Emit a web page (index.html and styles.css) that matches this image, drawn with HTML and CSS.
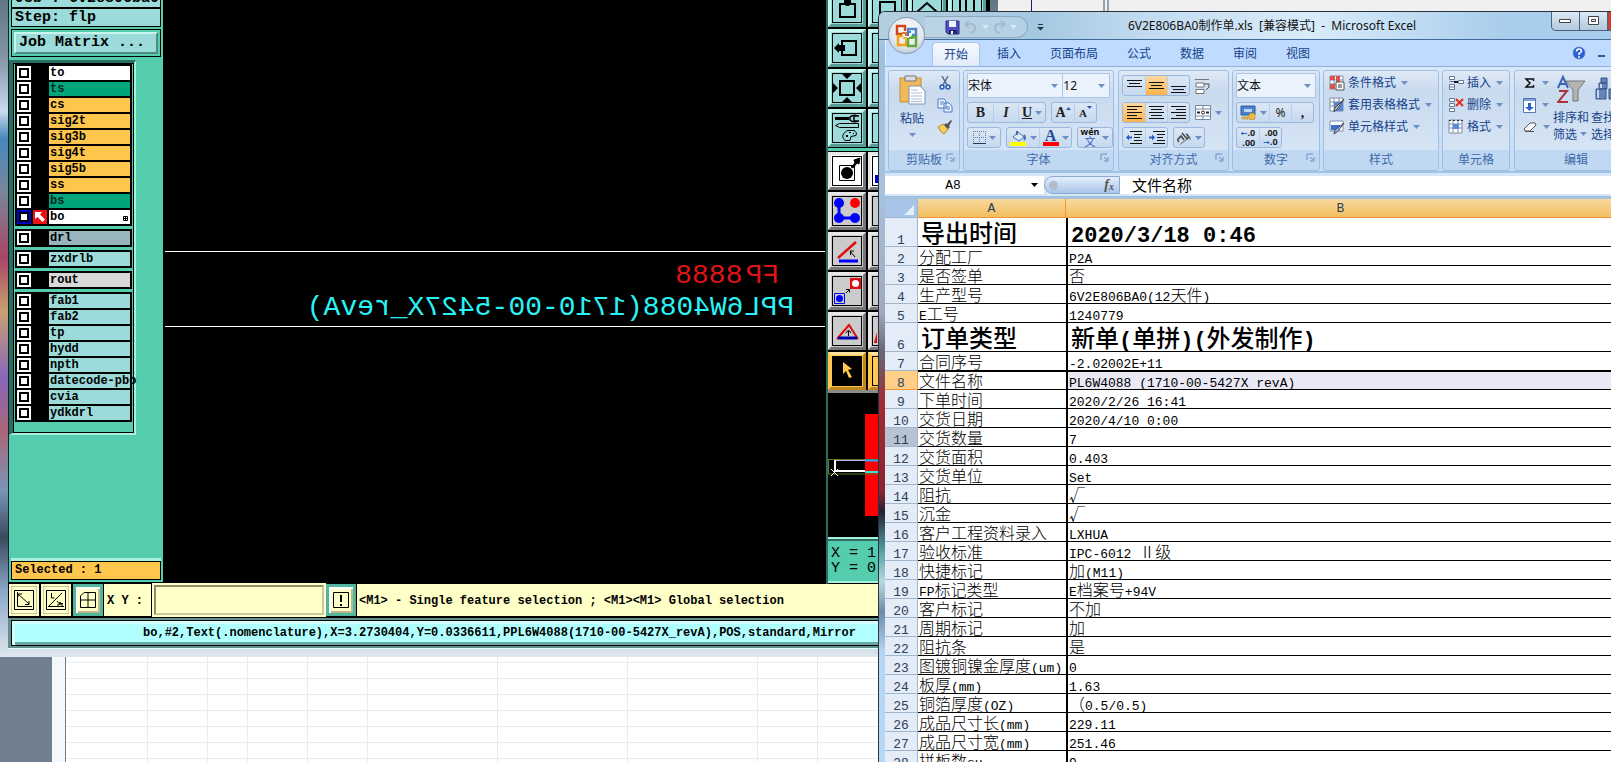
FILE: index.html
```html
<!DOCTYPE html>
<html lang="zh-CN">
<head>
<meta charset="utf-8">
<title>6V2E806BA0制作单.xls</title>
<link rel="stylesheet" href="styles.css">
</head>
<body>
<svg class="defs" aria-hidden="true">
  <symbol id="dd" viewBox="0 0 7 4"><path d="M0 0h7L3.500 4z" fill="#6c8fc4"/></symbol>
  <symbol id="launch" viewBox="0 0 9 9"><path d="M1 7V1h6M4 4l3 3M8 4v4H4" fill="none" stroke="#6a8fc0"/></symbol>
  <symbol id="grid" viewBox="0 0 16 16"><path d="M1 1h13v13H1z" fill="#fff" stroke="#7d8ea8"/><path d="M1 5h13M1 9h13M5 1v13M10 1v13" stroke="#7d8ea8"/></symbol>
</svg>

<div class="backdrop">
  <div class="mdi"></div>
  <div class="bsheet">
    <svg width="100%" height="106" aria-hidden="true"><path d="M0 6.500H900M0 22.500H900M0 38.500H900M0 54.500H900M0 70.500H900M0 86.500H900M0 102.500H900M81.500 0V110M141.500 0V110M181.500 0V110M241.500 0V110M301.500 0V110M431.500 0V110M561.500 0V110M691.500 0V110M751.500 0V110" stroke="#ebebeb" fill="none"/></svg>
  </div>
</div>
<div class="backtop"><i></i><b></b></div>

<section class="cad">
  <div class="cad-main">
    <aside class="side">
      <div class="job">Job : 6v2e806ba0</div>
      <div class="job">Step: flp</div>
      <div class="matrix"><button>Job Matrix ...</button></div>
      <div class="layers">
        <div class="blk">
          <label><input type="checkbox"><span class="w">to</span></label>
          <label><input type="checkbox"><span class="g">ts</span></label>
          <label><input type="checkbox"><span class="o">cs</span></label>
          <label><input type="checkbox"><span class="o">sig2t</span></label>
          <label><input type="checkbox"><span class="o">sig3b</span></label>
          <label><input type="checkbox"><span class="o">sig4t</span></label>
          <label><input type="checkbox"><span class="o">sig5b</span></label>
          <label><input type="checkbox"><span class="o">ss</span></label>
          <label><input type="checkbox"><span class="g">bs</span></label>
          <label class="act"><input type="checkbox"><svg width="14" height="14"><path d="M0 0h14v14H0z" fill="#e11"/><path d="M2 2h7L7 4.500l5 5L9.500 12l-5-5L2 9z" fill="#fff"/></svg><span class="w">bo<svg class="plus" width="5" height="5"><path d="M.5.5h4v4h-4zM2.500 0v5M0 2.500h5" fill="none" stroke="#000"/></svg></span></label>
        </div>
        <div class="blk"><label><input type="checkbox"><span class="d">drl</span></label></div>
        <div class="blk"><label><input type="checkbox"><span>zxdrlb</span></label></div>
        <div class="blk"><label><input type="checkbox"><span class="l">rout</span></label></div>
        <div class="blk">
          <label><input type="checkbox"><span>fab1</span></label>
          <label><input type="checkbox"><span>fab2</span></label>
          <label><input type="checkbox"><span>tp</span></label>
          <label><input type="checkbox"><span>hydd</span></label>
          <label><input type="checkbox"><span>npth</span></label>
          <label><input type="checkbox"><span>datecode-pbo</span></label>
          <label><input type="checkbox"><span>cvia</span></label>
          <label><input type="checkbox"><span>ydkdrl</span></label>
        </div>
      </div>
      <div class="selected">Selected : 1</div>
    </aside>
    <div class="canvas">
      <div class="strip">
        <p class="fp"><span>FP</span><span>8888</span></p>
        <p class="pn">PPL6W4088(1710-00-5427X_revA)</p>
      </div>
    </div>
    <div class="right">
      <div class="tools teal">
        <button aria-label="up"><svg viewBox="0 0 38 38"><path d="M12 15h15v13H12z" fill="none" stroke="#000" stroke-width="2"/><path d="M16 8h7v6l-2 3h-3l-2-3z"/></svg></button>
        <button aria-label="home"><svg viewBox="0 0 38 38"><path d="M12 13h15v15H12z" fill="none" stroke="#000" stroke-width="2"/></svg></button>
        <button aria-label="front"><svg viewBox="0 0 38 38"><path d="M9 23L19 14l10 9M13 22v6h12v-6" fill="none" stroke="#000" stroke-width="2"/></svg></button>
        <button aria-label="lines"><svg viewBox="0 0 38 38"><path d="M12 8v20M18 8v20M26 8v20" fill="none" stroke="#000" stroke-width="2"/></svg></button>
        <button aria-label="left"><svg viewBox="0 0 38 38"><path d="M14 12h14v14H14z" fill="none" stroke="#000" stroke-width="2"/><path d="M6 19l5-5v2h6v6h-6v2z"/></svg></button>
        <button aria-label="step"><svg viewBox="0 0 38 38"></svg></button>
        <button aria-label="a"><svg viewBox="0 0 38 38"></svg></button>
        <button aria-label="b"><svg viewBox="0 0 38 38"></svg></button>
        <button aria-label="zoom"><svg viewBox="0 0 38 38"><path d="M12 12h14v14H12z" fill="none" stroke="#000" stroke-width="2"/><path d="M14 5h10l-5 5zM14 33h10l-5-5zM5 14v10l5-5zM33 14v10l-5-5z"/></svg></button>
        <button aria-label="c"><svg viewBox="0 0 38 38"></svg></button>
        <button aria-label="d"><svg viewBox="0 0 38 38"></svg></button>
        <button aria-label="e"><svg viewBox="0 0 38 38"></svg></button>
        <button aria-label="setup"><svg viewBox="0 0 38 38"><path d="M7 8h14v3H7z"/><path d="M30 7q-5-2-8 1v3q3 3 8 1M31 7h-5v5h5" fill="none" stroke="#000" stroke-width="1.500"/><path d="M7.500 16.500l4-2h19v4h-19z" fill="none" stroke="#000"/><path d="M19 21.500h7q4 2 2 5l-5 1-1 4h-5q-4-4-1-7z" fill="none" stroke="#000"/><path d="M18 26h2v2h-2zM21 23h2v1h-2zM25 24h1v1h-1z"/></svg></button>
        <button aria-label="f"><svg viewBox="0 0 38 38"></svg></button>
        <button aria-label="g"><svg viewBox="0 0 38 38"></svg></button>
        <button aria-label="h"><svg viewBox="0 0 38 38"></svg></button>
      </div>
      <div class="tools grey">
        <button class="white" aria-label="move"><svg viewBox="0 0 38 38"><path d="M11.500 13.500h15v15h-15z" fill="none" stroke="#000"/><circle cx="19" cy="21" r="6"/><path d="M23 15l4-4-1-3 6-2-1 6-2-1-4 5z" stroke="#000"/></svg></button>
        <button class="white" aria-label="copy"><svg viewBox="0 0 38 38"><path d="M7 23h6v8H7z" fill="#00c"/></svg></button>
        <button aria-label="net"><svg viewBox="0 0 38 38"><path d="M11 11v15h16" fill="none" stroke="#00f" stroke-width="3"/><circle cx="11" cy="11" r="5" fill="#00f"/><circle cx="11" cy="26" r="5" fill="#00f"/><circle cx="27" cy="26" r="5" fill="#00f"/><circle cx="27" cy="11" r="5" fill="#f00"/></svg></button>
        <button aria-label="i"><svg viewBox="0 0 38 38"></svg></button>
        <button aria-label="angle"><svg viewBox="0 0 38 38"><path d="M10 26L28 10" stroke="#e00c14" stroke-width="2.500"/><path d="M11 29h19" stroke="#00f" stroke-width="3"/><path d="M22 19h4M22.500 19v4M22 19l5 6" fill="none" stroke="#000"/></svg></button>
        <button aria-label="j"><svg viewBox="0 0 38 38"></svg></button>
        <button aria-label="swap"><svg viewBox="0 0 38 38"><path d="M22 6h11v11H22z" fill="#e00c14"/><circle cx="27.500" cy="11.500" r="3.500" fill="#fff"/><path d="M6.500 21.500h10v10h-10z" fill="none" stroke="#00f"/><circle cx="11.500" cy="26.500" r="3.500" fill="#00f"/><path d="M18 21l3-3M18 17.500h3.500v3" fill="none" stroke="#000"/></svg></button>
        <button aria-label="k"><svg viewBox="0 0 38 38"></svg></button>
        <button aria-label="triangle"><svg viewBox="0 0 38 38"><path d="M9 27L21 13l9 14" fill="none" stroke="#e00c14" stroke-width="2"/><path d="M10 26h19" stroke="#00a" stroke-width="3"/><path d="M20.500 24v-5M18 21l2.500-3 2.500 3" fill="none" stroke="#000"/></svg></button>
        <button aria-label="m"><svg viewBox="0 0 38 38"><path d="M9 20v11H6z" fill="#e00"/></svg></button>
        <button class="gold on" aria-label="select"><svg viewBox="0 0 38 38"><path d="M15 10l9 7-4 1 4 7-3 1-3-7-3 3z" fill="#ffc850"/></svg></button>
        <button class="gold" aria-label="n"><svg viewBox="0 0 38 38"></svg></button>
      </div>
      <div class="map"><svg width="160" height="146"><path d="M37 21h60v102H37z" fill="#f00"/><path d="M0 66.500h60M.5 66v15H60" fill="none" stroke="#5a7d1e"/><path d="M7 67.500h30" stroke="#caa9ff"/><path d="M7 67v11h30" fill="none" stroke="#fff" stroke-width="2"/><path d="M37 67.500h30" stroke="#28a0ff" stroke-width="2"/><path d="M37 79h30" stroke="#3ce0e0" stroke-width="2"/><path d="M3 76l7 7M10 76l-7 7" stroke="#fff"/></svg></div>
      <div class="coords">X = 1<br>Y = 0</div>
    </div>
  </div>
  <div class="prompt">
    <button class="pb" aria-label="snap"><svg width="20" height="20"><path d="M.5.5h19v19H.5zM3.500 2v14.500H18" fill="none" stroke="#000"/><path d="M4 4l11 10M4 7V4h4M11 14.500h4V11" fill="none" stroke="#000"/></svg></button>
    <button class="pb" aria-label="unit"><svg width="20" height="20"><path d="M.5.5h19v19H.5z" fill="none" stroke="#000"/><path d="M3 16L16 3M5.500 3v5h3M2 16.500h16M11 11l2 2.500h4M11 15h2l1-3 1 3h2" fill="none" stroke="#000"/></svg></button>
    <button class="pb gr" aria-label="grid"><svg width="16" height="16"><path d="M4 .5h11.500v15H.5V4zM8 0v16M0 8h16" fill="none" stroke="#000"/></svg></button>
    <label for="xy">X Y :</label>
    <input id="xy" type="text">
    <button class="pb gr" aria-label="alert"><svg width="16" height="16"><path d="M.5.5h15v15H.5z" fill="none" stroke="#000"/><path d="M8 3v7M8 12v2" stroke="#000" stroke-width="2"/></svg></button>
    <span class="hint">&lt;M1&gt; - Single feature selection ; &lt;M1&gt;&lt;M1&gt; Global selection</span>
  </div>
  <div class="status"><button>bo,#2,Text(.nomenclature),X=3.2730404,Y=0.0336611,PPL6W4088(1710-00-5427X_revA),POS,standard,Mirror</button></div>
</section>

<section class="excel">
  <header class="title">
    <div class="qat">
      <button aria-label="保存"><svg width="15" height="15"><path d="M1 1h13v13H3l-2-2z" fill="#4c4fc0" stroke="#2c2f86"/><path d="M4 1h7v6H4z" fill="#eef3ff"/><path d="M4 10h8v4H4z" fill="#222868"/><path d="M6 11h2v3H6z" fill="#fff"/></svg></button>
      <button aria-label="撤消"><svg width="13" height="14"><path d="M2 4h5q4 0 4 4t-5 5M5 1L1 4l4 4" fill="none" stroke="#a9b8cb" stroke-width="2"/></svg></button>
      <svg width="7" height="4"><path d="M0 0h7L3.500 4z" fill="#dfe9f2"/></svg>
      <button aria-label="恢复"><svg width="13" height="14"><path d="M11 4H6Q2 4 2 8t5 5M8 1l4 3-4 4" fill="none" stroke="#a9b8cb" stroke-width="2"/></svg></button>
      <svg width="7" height="4"><path d="M0 0h7L3.500 4z" fill="#dfe9f2"/></svg>
    </div>
    <svg class="more" width="7" height="7"><path d="M1 .5h5" stroke="#26364e"/><path d="M0 3h7L3.500 6.500z" fill="#26364e"/></svg>
    <h1>6V2E806BA0制作单.xls&nbsp; [兼容模式] &nbsp;- &nbsp;Microsoft Excel</h1>
    <div class="wbtn">
      <button aria-label="最小化"><svg width="13" height="6"><path d="M.5 1.500h11v3H.5z" fill="#fff" stroke="#444"/></svg></button>
      <button aria-label="最大化"><svg width="11" height="10"><path d="M.5.5h10v8H.5zM3.500 3.500h4v2h-4z" fill="#fff" stroke="#444"/></svg></button>
      <button class="cl" aria-label="关闭"></button>
    </div>
  </header>
  <button class="orb" aria-label="Office"><svg width="24" height="24" viewBox="0 0 24 24" fill="none" stroke-width="2.500"><path d="M10 7V2H2v8h5" stroke="#d8421a"/><path d="M13 8V5h8v6h-4" stroke="#4f86c8"/><path d="M8 12H3v9h8v-4" stroke="#f5a21a"/><path d="M14 15h-1v7h8v-9h-5" stroke="#5fa83a"/><path d="M7 9h4v3" stroke="#e8742a" stroke-width="2"/><path d="M16 8h-3v4" stroke="#3f7fd0" stroke-width="2"/><path d="M11 17v-3H8" stroke="#f5b52a" stroke-width="2"/><path d="M14 14h4" stroke="#5fa83a" stroke-width="2"/></svg></button>
  <nav class="tabs">
    <button class="on">开始</button><button>插入</button><button>页面布局</button><button>公式</button><button>数据</button><button>审阅</button><button>视图</button>
    <span class="help"><svg width="14" height="14"><circle cx="7" cy="7" r="6.500" fill="#2a62d0" stroke="#b9cfee"/><path d="M4.500 5.500q0-2.500 2.500-2.500t2.500 2q0 1.500-2.500 2.500V9M7 10v2" fill="none" stroke="#fff" stroke-width="1.500"/></svg><svg width="7" height="14"><path d="M0 10h7" stroke="#3b5a86" stroke-width="2"/></svg></span>
  </nav>
  <div class="ribbon">
    <div class="grp g1">
      <div class="body row">
        <button class="big"><svg width="27" height="30"><path d="M1 3h21v24H1z" fill="#f0b95a" stroke="#c98f35"/><path d="M6 1h11v5H6z" fill="#d8dde4" stroke="#777"/><path d="M10 11h11l5 5v13H10z" fill="#fff" stroke="#7d93b5"/><path d="M12 15h7M12 18h11M12 21h11M12 24h11M12 26.500h11" stroke="#a9bcd8"/></svg>粘贴<svg width="7" height="4"><use href="#dd"/></svg></button>
        <div class="col ic3">
          <button aria-label="剪切"><svg width="16" height="16"><path d="M5 1l5 9M11 1L6 10" stroke="#556b8c" stroke-width="1.500"/><circle cx="5" cy="12" r="2" fill="none" stroke="#2f5cb0" stroke-width="1.500"/><circle cx="11" cy="12" r="2" fill="none" stroke="#2f5cb0" stroke-width="1.500"/></svg></button>
          <button aria-label="复制"><svg width="16" height="16"><path d="M1 2h6l2 2v7H1zM7 6h5l3 3v6H7z" fill="#eef4ff" stroke="#4b79c4"/><path d="M3 5h4M3 7h3M9 10h4M9 12h4" stroke="#4b79c4"/></svg></button>
          <button aria-label="格式刷"><svg width="16" height="16"><path d="M1 8l5-3 5 5-4 5q-4-2-6-7z" fill="#f3cf62" stroke="#b98a2a"/><path d="M7 6l4 4 2-2-4-4zM10 5l4-4 1 1-3 5" fill="#555"/></svg></button>
        </div>
      </div>
      <div class="cap">剪贴板<svg width="9" height="9"><use href="#launch"/></svg></div>
    </div>
    <div class="grp g2">
      <div class="body">
        <div class="row sel"><span class="s s1"><select aria-label="字体"><option>宋体</option></select><svg width="7" height="4"><use href="#dd"/></svg></span><span class="s s2"><select aria-label="字号"><option>12</option></select><svg width="7" height="4"><use href="#dd"/></svg></span></div>
        <div class="row r5">
          <div class="bg"><button class="t25 serif"><b>B</b></button><button class="t25 serif"><b><i>I</i></b></button><button class="t25 serif"><b><u>U</u></b><svg width="7" height="4"><use href="#dd"/></svg></button></div>
          <div class="bg"><button class="serif t22"><b>A</b><svg class="tri" width="5" height="4"><path d="M0 4h5L2.500 1z" fill="#2a5bb0"/></svg></button><button class="serif t22 sm"><b>A</b><svg class="tri" width="5" height="4"><path d="M0 0h5L2.500 3z" fill="#2a5bb0"/></svg></button></div>
        </div>
        <div class="row r5">
          <div class="bg"><button class="t33" aria-label="边框"><svg width="13" height="13"><path d="M.5 0v13M6.500 0v13M12.500 0v13M0 .5h13M0 6.500h13" stroke="#68809f" stroke-dasharray="1 1"/><path d="M0 12.500h13" stroke="#26364e"/></svg><svg width="7" height="4"><use href="#dd"/></svg></button></div>
          <div class="bg"><button class="t33" aria-label="填充颜色"><svg width="17" height="16"><path d="M3 7l5-5 6 5-5 4z" fill="#dfe9f8" stroke="#4a6fa8"/><path d="M7 5V1M14 5q2 3 0 5" fill="none" stroke="#4a6fa8" stroke-width="2"/><path d="M0 12h16v4H0z" fill="#ff0"/></svg><svg width="7" height="4"><use href="#dd"/></svg></button><button class="t33 serif" aria-label="字体颜色"><span class="fc">A</span><svg width="7" height="4"><use href="#dd"/></svg></button></div>
          <div class="bg"><button class="wen"><span><small>wén</small>文</span><svg width="7" height="4"><use href="#dd"/></svg></button></div>
        </div>
      </div>
      <div class="cap">字体<svg width="9" height="9"><use href="#launch"/></svg></div>
    </div>
    <div class="grp g3">
      <div class="body">
        <div class="row r5 h25">
          <div class="bg"><button class="t22" aria-label="顶端对齐"><svg width="15" height="15"><path d="M0 2.500h15M2 5.500h11M0 8.500h15" stroke="#111" stroke-width="1"/></svg></button><button class="t22 hot" aria-label="垂直居中"><svg width="15" height="15"><path d="M0 4.500h15M2 7.500h11M0 10.500h15" stroke="#111"/></svg></button><button class="t22" aria-label="底端对齐"><svg width="15" height="15"><path d="M0 8.500h15M2 11.500h11M0 14.500h15" stroke="#111"/></svg></button></div>
          <button aria-label="自动换行"><svg width="16" height="16"><path d="M0 1.500h14M1 5h8v4H1zM1 11.500h8v4H1z" fill="#fff" stroke="#777"/><path d="M9 6h5v3l-3 3" fill="none" stroke="#555"/></svg></button>
        </div>
        <div class="row r5">
          <div class="bg"><button class="t22 hot" aria-label="左对齐"><svg width="15" height="13"><path d="M0 .5h15M0 3.500h10M0 6.500h15M0 9.500h10M0 12.500h15" stroke="#111"/></svg></button><button class="t22" aria-label="居中"><svg width="15" height="13"><path d="M0 .5h15M2 3.500h11M0 6.500h15M2 9.500h11M0 12.500h15" stroke="#111"/></svg></button><button class="t22" aria-label="右对齐"><svg width="15" height="13"><path d="M0 .5h15M5 3.500h10M0 6.500h15M5 9.500h10M0 12.500h15" stroke="#111"/></svg></button></div>
          <button class="gap" aria-label="合并"><svg width="16" height="15"><path d="M.5.5h15v14H.5zM.5 4h15M.5 11h15M8 0v4M8 11v4" fill="#fff" stroke="#7088a8"/><path d="M2 7.500h3M11 7.500h3" stroke="#222" stroke-width="2"/><circle cx="8" cy="7.500" r="1.500" fill="none" stroke="#222"/></svg><svg width="7" height="4"><use href="#dd"/></svg></button>
        </div>
        <div class="row r5">
          <div class="bg"><button class="t22" aria-label="减少缩进"><svg width="16" height="13"><path d="M4 .5h12M8 3.500h8M8 6.500h6M8 9.500h8M4 12.500h12" stroke="#111"/><path d="M0 6.500l3-3v6z" fill="#2a5bd0"/><path d="M2 6.500h4" stroke="#2a5bd0" stroke-width="2"/></svg></button><button class="t22" aria-label="增加缩进"><svg width="16" height="13"><path d="M4 .5h12M8 3.500h8M8 6.500h6M8 9.500h8M4 12.500h12" stroke="#111"/><path d="M6 6.500l-3-3v6z" fill="#2a5bd0"/><path d="M0 6.500h4" stroke="#2a5bd0" stroke-width="2"/></svg></button></div>
          <div class="bg"><button class="t30" aria-label="方向"><svg width="16" height="14"><path d="M2 8l3-3 3 4M3 11q-3-3 1-4M6 2l5 6q3-3-1-5" fill="none" stroke="#444" stroke-width="1.500"/><path d="M4 13.500L14 6M11 6h3v3" fill="none" stroke="#666"/></svg><svg width="7" height="4"><use href="#dd"/></svg></button></div>
        </div>
      </div>
      <div class="cap">对齐方式<svg width="9" height="9"><use href="#launch"/></svg></div>
    </div>
    <div class="grp g4">
      <div class="body">
        <div class="row sel"><span class="s s3"><select aria-label="数字格式"><option>文本</option></select><svg width="7" height="4"><use href="#dd"/></svg></span></div>
        <div class="row"><div class="bg"><button class="t33" aria-label="货币"><svg width="17" height="15"><path d="M1 1h14v9H1z" fill="#4c7fd0" stroke="#2c5a9c"/><path d="M4 4h8v3H4z" fill="#bcd4f4"/><path d="M9 9q3-2 6 0v5q-3 2-6 0zM2 12h6v2H2z" fill="#f0b93a" stroke="#b07c1a" stroke-width=".5"/></svg><svg width="7" height="4"><use href="#dd"/></svg></button><button class="t22">%</button><button class="t22 serif"><b>,</b></button></div></div>
        <div class="row"><div class="bg dec"><button class="t22"><span><em>←</em>.0<br>.00</span></button><button class="t22"><span>.00<br><em>→</em>.0</span></button></div></div>
      </div>
      <div class="cap">数字<svg width="9" height="9"><use href="#launch"/></svg></div>
    </div>
    <div class="grp g5">
      <div class="body list">
        <button><svg width="16" height="16"><use href="#grid"/><path d="M1 1h5v4H1zM1 9h5v5H1zM7 1h4v8H7z" fill="#d9534a"/><path d="M7 7h8v8H7z" fill="#fff" stroke="#555"/><path d="M9 10h4M9 12h4" stroke="#333"/></svg>条件格式<svg width="7" height="4"><use href="#dd"/></svg></button>
        <button><svg width="16" height="16"><use href="#grid"/><path d="M5 5h9v9H5z" fill="#5a86d0"/><path d="M15 2L8 12l-3 3 1-4z" fill="#f4d9a0" stroke="#445"/></svg>套用表格格式<svg width="7" height="4"><use href="#dd"/></svg></button>
        <button><svg width="16" height="16"><path d="M1 2h13v10H1z" fill="#fff" stroke="#7d8ea8"/><path d="M2 6h9v5H2z" fill="#3f6fd0"/><path d="M15 4L9 12l-4 3 1-4z" fill="#9fc0ee" stroke="#445"/></svg>单元格样式<svg width="7" height="4"><use href="#dd"/></svg></button>
      </div>
      <div class="cap">样式</div>
    </div>
    <div class="grp g6">
      <div class="body list">
        <button><svg width="16" height="16"><path d="M1.500 1.500h5v3h-5zM1.500 6.500h5M1.500 9.500h5v5h-5zM1.500 12h5M10.500 5.500h5v3h-5z" fill="#fff" stroke="#63799c"/><path d="M6 7h4" stroke="#111" stroke-width="2"/></svg>插入<svg width="7" height="4"><use href="#dd"/></svg></button>
        <button><svg width="16" height="16"><path d="M1.500 1.500h5v3h-5zM1.500 6.500h5v3h-5zM1.500 11.500h5v3h-5z" fill="#fff" stroke="#63799c"/><path d="M8 2l7 7M15 2L8 9" stroke="#e0301e" stroke-width="2"/></svg>删除<svg width="7" height="4"><use href="#dd"/></svg></button>
        <button><svg width="16" height="16"><use href="#grid"/><path d="M5 5h6v5H5z" fill="#5a8ae0"/><path d="M1 1.500h14" stroke="#26364e" stroke-dasharray="2 2"/></svg>格式<svg width="7" height="4"><use href="#dd"/></svg></button>
      </div>
      <div class="cap">单元格</div>
    </div>
    <div class="grp g7">
      <div class="body row">
        <div class="col ic3 ed">
          <button aria-label="求和"><svg width="12" height="12"><path d="M9.500 4V2H2l4 4-4 4h7.500V8" fill="none" stroke="#111" stroke-width="1.500"/></svg><svg width="7" height="4"><use href="#dd"/></svg></button>
          <button aria-label="填充"><svg width="13" height="15"><path d="M.5.5h12v14H.5z" fill="#fff" stroke="#5577aa"/><path d="M1 1h11v2H1z" fill="#7aa0dd"/><path d="M5 5h3v4h3l-4.500 4L2 9h3z" fill="#2a62d0"/></svg><svg width="7" height="4"><use href="#dd"/></svg></button>
          <button aria-label="清除"><svg width="14" height="13"><path d="M1 8l6-6h5l1 2-6 6H2z" fill="#fff" stroke="#555"/><path d="M2 10.500h9" stroke="#555"/></svg><svg width="7" height="4"><use href="#dd"/></svg></button>
        </div>
        <button class="big"><svg width="29" height="30"><path d="M9 6h19l-7 9v11h-5V15z" fill="#b5b5b5" stroke="#777"/><path d="M1 13L6 2l5 11M3 9h6" fill="none" stroke="#3b62b8" stroke-width="2"/><path d="M2 16h8L1 27h10" fill="none" stroke="#a8343c" stroke-width="2"/></svg><span>排序和<br>筛选 <svg width="7" height="4"><use href="#dd"/></svg></span></button>
        <button class="big"><svg width="29" height="30"><path d="M1 14h10v10H1zM4 8h8v6H4zM6 3h6v5H6zM14 14h10v10H14z" fill="#6285bd" stroke="#38568a"/><path d="M3 15v8M6 9v4" stroke="#c5d6ef" stroke-width="2"/></svg><span>查找和<br>选择 <svg width="7" height="4"><use href="#dd"/></svg></span></button>
      </div>
      <div class="cap">编辑</div>
    </div>
  </div>
  <div class="fbar">
    <label class="nbox"><input type="text" value="A8" aria-label="名称框"><svg width="7" height="4"><path d="M0 0h7L3.500 4z"/></svg></label>
    <div class="fx"><i></i><span>f<sub>x</sub></span></div>
    <input class="fin" type="text" value="文件名称" aria-label="编辑栏">
  </div>
  <table class="sheet">
    <colgroup><col class="c0"><col class="c1"><col class="c2"><col class="c3"></colgroup>
    <thead><tr><th class="corner"><svg width="10" height="10"><path d="M10 0v10H0z" fill="#e6eefa"/></svg></th><th>A</th><th>B</th><th></th></tr></thead>
    <tbody>
      <tr class="h"><th>1</th><td>导出时间</td><td>2020/3/18 0:46</td><td></td></tr>
      <tr><th>2</th><td>分配工厂</td><td>P2A</td><td></td></tr>
      <tr><th>3</th><td>是否签单</td><td><span class="cn">否</span></td><td></td></tr>
      <tr><th>4</th><td>生产型号</td><td>6V2E806BA0(12<span class="cn">天件</span>)</td><td></td></tr>
      <tr><th>5</th><td><span class="m">E</span>工号</td><td>1240779</td><td></td></tr>
      <tr class="h"><th>6</th><td>订单类型</td><td><span class="cn">新单</span>(<span class="cn">单拼</span>)(<span class="cn">外发制作</span>)</td><td></td></tr>
      <tr><th>7</th><td>合同序号</td><td>-2.02002E+11</td><td></td></tr>
      <tr class="cur"><th>8</th><td>文件名称</td><td>PL6W4088 (1710-00-5427X revA)</td><td></td></tr>
      <tr><th>9</th><td>下单时间</td><td>2020/2/26 16:41</td><td></td></tr>
      <tr><th>10</th><td>交货日期</td><td>2020/4/10 0:00</td><td></td></tr>
      <tr class="hov"><th>11</th><td>交货数量</td><td>7</td><td></td></tr>
      <tr><th>12</th><td>交货面积</td><td>0.403</td><td></td></tr>
      <tr><th>13</th><td>交货单位</td><td>Set</td><td></td></tr>
      <tr><th>14</th><td>阻抗</td><td><span class="cn">√</span></td><td></td></tr>
      <tr><th>15</th><td>沉金</td><td><span class="cn">√</span></td><td></td></tr>
      <tr><th>16</th><td>客户工程资料录入</td><td>LXHUA</td><td></td></tr>
      <tr><th>17</th><td>验收标准</td><td>IPC-6012 <span class="cn">Ⅱ级</span></td><td></td></tr>
      <tr><th>18</th><td>快捷标记</td><td><span class="cn">加</span>(M11)</td><td></td></tr>
      <tr><th>19</th><td><span class="m">FP</span>标记类型</td><td>E<span class="cn">档案号</span>+94V</td><td></td></tr>
      <tr><th>20</th><td>客户标记</td><td><span class="cn">不加</span></td><td></td></tr>
      <tr><th>21</th><td>周期标记</td><td><span class="cn">加</span></td><td></td></tr>
      <tr><th>22</th><td>阻抗条</td><td><span class="cn">是</span></td><td></td></tr>
      <tr><th>23</th><td>图镀铜镍金厚度<span class="m">(um)</span></td><td>0</td><td></td></tr>
      <tr><th>24</th><td>板厚<span class="m">(mm)</span></td><td>1.63</td><td></td></tr>
      <tr><th>25</th><td>铜箔厚度<span class="m">(OZ)</span></td><td><span class="cn">（</span>0.5/0.5)</td><td></td></tr>
      <tr><th>26</th><td>成品尺寸长<span class="m">(mm)</span></td><td>229.11</td><td></td></tr>
      <tr><th>27</th><td>成品尺寸宽<span class="m">(mm)</span></td><td>251.46</td><td></td></tr>
      <tr><th>28</th><td>拼板数<span class="m">su</span></td><td>9</td><td></td></tr>
    </tbody>
  </table>
</section>
</body>
</html>
```

FILE: styles.css
```css
*, *::before { box-sizing: border-box; }
html, body { height: 100%; }
body { margin: 0; overflow: hidden; position: relative; background: #fff; font: 12px/16px "Noto Sans", "Noto Sans CJK SC", sans-serif; }
button, input, select { font: inherit; color: inherit; border: 0; margin: 0; padding: 0; background: none; border-radius: 0; }
button { display: flex; align-items: center; justify-content: center; flex: none; }
p, h1 { margin: 0; }
svg { display: block; flex: none; }
.defs { position: absolute; width: 0; height: 0; }

/* Windows behind */
.backdrop { height: 100%; display: grid; grid-template-columns: 52px 1fr; background: #6f7f90; }
.bsheet { border-left: 13px solid #f4f7fb; background: #fff; display: flex; align-items: flex-end; }
.bsheet svg { border-left: 1px solid #707c8c; }
.backtop { position: absolute; left: 990px; right: 0; top: 0; height: 60px; background: #f0f0f0; border-left: 7px solid #d6e6f0; display: flex; }
.backtop i { width: 35px; border-right: 1px solid #1c1c7a; }
.backtop b { width: 77px; border-right: 6px double #98a2ad; }

/* CAD window */
.cad { position: absolute; left: 0; top: 0; width: 998px; height: 657px; display: flex; flex-direction: column;
  border: solid #6d86a4; border-width: 0 8px 8px; border-image: linear-gradient(#5d7182, #8795a5 10%, #c9dcec 18%, #48b 22%, #789 30%, #a46 40%, #c9a070 48%, #86b 58%, #a67 66%, #7895b8 75%, #3a4a5c 82%, #8aa6c8 90%, #dfe7ee) 8;
  background: #000; font: bold 12px/14px "Liberation Mono", monospace; color: #000; }
.cad-main { flex: none; display: grid; grid-template-columns: 155px 1fr 164px; height: 584px; overflow: hidden; }
.side { background: #53cdae; display: flex; flex-direction: column; border-left: 1px solid #123; height: 582px; padding-bottom: 2px; }
.job { flex: none; height: 19px; margin: 0 2px; padding: 0 3px; border: 1px solid #000; background: #9bdbda; font-size: 15px; line-height: 17px; white-space: nowrap; overflow: hidden; }
.job:first-child { margin-top: -11px; }
.matrix { margin: 2px 2px 3px; padding: 2px; border: 1px solid #000; }
.matrix button { width: 100%; height: 22px; background: #9bdbda; border: 2px solid; border-color: #c8f6ee #4e8a80 #4e8a80 #c8f6ee; font-size: 15px; font-weight: 700; justify-content: flex-start; padding-left: 3px; }
.layers { align-self: flex-start; width: 127px; height: 375px; border: solid; border-width: 3px 2px 2px 4px; border-color: #2c6d60 #a8f0dc #a8f0dc #2c6d60; padding: 1px 3px 9px 2px; display: flex; flex-direction: column; gap: 3px; box-shadow: inset -1px -1px #000, inset 1px 1px #000; }
.blk { background: #000; padding: 1px; width: 117px; }
.blk label { display: flex; height: 16px; padding: 1px; gap: 2px; }
.blk input { appearance: none; width: 14px; height: 14px; flex: none; background: #fff; display: grid; place-content: center; }
.blk input::before { content: ""; width: 10px; height: 10px; border: 2px solid #000; }
.blk span { margin-left: auto; width: 81px; height: 14px; flex: none; background: #9bdbda; padding-left: 1px; white-space: nowrap; display: flex; align-items: center; }
.blk .w { background: #fff; } .blk .g { background: #00a57b; color: #04281d; } .blk .o { background: #ffc64e; }
.blk .d { background: #9ab4bd; } .blk .l { background: #d9d9d9; }
.blk .act input { border: 2px solid #0000c8; }
.plus { margin: 2px 2px 0 auto; }
.selected { flex: none; margin: auto 2px 0; height: 19px; padding: 0 3px; border: 1px solid #000; background: #ffc64e; line-height: 17px; box-shadow: 0 -3px #a8f0dc; }
.canvas { background: #000; padding: 251px 0 0 2px; }
.strip { height: 76px; border: solid #fff; border-width: 1px 0; transform: scaleX(-1); padding: 9px 0 0 31px; font-weight: 400; font-size: 28px; line-height: 34px; color: #29f3f6; white-space: nowrap; margin-right: 1px; }
.fp { display: flex; gap: 3px; padding-left: 15px; color: #e01414; line-height: 30px; }
.right { border-left: 2px solid #2c6d60; background: #000; }
.tools { display: grid; grid-template-columns: repeat(4, 38px); gap: 2px; overflow: hidden; }
.tools button { width: 38px; height: 38px; background: #9bdbda; border: 3px solid; border-color: #c8f6f0 #5a9c96 #5a9c96 #c8f6f0; position: relative; }
.tools button::before { content: ""; position: absolute; inset: 1px; border: 1px solid #000; }
.tools svg { width: 38px; height: 38px; margin: -3px; position: relative; }
.teal { padding-bottom: 1px; margin-top: -11px; border-bottom: 3px solid #53cdae; }
.grey { padding-top: 1px; border-bottom: 3px solid #8a8a8a; grid-template-columns: repeat(2, 38px); }
.grey button { background: #cbcbcb; border-color: #e8e8e8 #777 #777 #e8e8e8; }
.grey .white { background: #fff; }
.grey .gold { background: #ffc850; border-color: #ffe2a0 #c08820 #c08820 #ffc850; }
.grey .on::before { background: #000; }
.map { height: 146px; overflow: hidden; border-bottom: 2px solid #a8f0dc; }
.coords { height: 44px; border: solid; border-width: 2px 0 2px; border-color: #2c6d60 #a8f0dc #a8f0dc; background: #53cdae; padding: 5px 3px; font-size: 15px; line-height: 15px; font-weight: 400; }
.prompt { flex: none; display: flex; height: 34px; background: #000; border: solid #000; border-width: 0 0 2px 1px; }
.prompt > * { background: #ffffc8; margin-right: 2px; flex: none; }
.pb { width: 30px; border: 3px double #c9c9a0; outline: 1px solid #ffffc8; outline-offset: -1px; }
.prompt .gr { border: 3px solid #53b59c; box-shadow: inset 2px 2px #fff, inset -2px -2px #b9b990; outline: 0; margin-right: 1px; }
.prompt label { width: 47px; padding-left: 3px; line-height: 34px; }
.prompt input { width: 172px; border: 3px solid; border-color: #8d8d6b #c9c9a0 #c9c9a0 #8d8d6b; outline: 2px solid #ffffc8; outline-offset: -1px; margin-right: 1px; }
.prompt .hint { flex: 1; line-height: 34px; padding-left: 2px; margin: 0; }
.status { flex: 1; background: #5f908e; padding: 2px 2px 1px 3px; border-bottom: 1px solid #dff; }
.status button { width: 100%; height: 26px; background: #b0ffff; border: 1px solid #000; box-shadow: inset 3px 3px #d4ffff, inset -2px -3px #6aa7a6; }

/* Excel window */
.excel { position: absolute; left: 878px; top: 11px; right: -51px; height: 100%; border: 1px solid #2a3440; border-radius: 7px 0 0 0; padding: 0 6px; overflow: hidden; color: #15428b;
  background: linear-gradient(#b8d6ee, #9fc0de 40px, #a9c2dc 180px, #9fa9bb 300px, #667 340px, #a22b35 390px, #8a2530 480px, #223 500px, #55a2a8 540px, #b8d8dc 570px, #6c8ca8 600px, #b5d5f5 640px, #b8d8f8); }
.title { height: 28px; margin: 0 -6px; padding-left: 46px; display: flex; align-items: flex-start; background: linear-gradient(90deg, #b4cfdf, #a5c8e2 20%, #c3dcf0 35%, #d9ecfa 55%, #a9cdec 80%, #a9cdec); border-bottom: 1px solid #3f6a9a; }
.qat { width: 103px; height: 22px; margin-top: 4px; padding: 0 10px 0 20px; display: flex; align-items: center; justify-content: space-between; border: 1px solid #8ea9bf; border-left: 0; border-radius: 0 11px 11px 0; background: #ffffff26; }
.more { margin: 12px 0 0 9px; }
.title h1 { flex: 1; padding-top: 6px; margin-right: 161px; text-align: center; font-size: 12px; line-height: 16px; font-weight: 400; color: #111; white-space: nowrap; }
.wbtn { display: flex; position: absolute; right: 5px; top: 0; height: 19px; border: 1px solid #4e6377; border-top: 0; border-radius: 0 0 5px 5px; background: linear-gradient(#dbe9f4, #b3c9dc); }
.wbtn button { width: 28px; border-right: 1px solid #4e6377; }
.wbtn .cl { width: 47px; background: #c8412c; border: 0; }
.orb { position: absolute; left: 9px; top: 5px; width: 37px; height: 37px; border-radius: 50%; background: radial-gradient(circle at 50% 35%, #fff, #dfe6ee 60%, #9fb2c6); border: 1px solid #8798ad; z-index: 1; }
.tabs { display: flex; gap: 5px; height: 26px; padding: 2px 9px 0 46px; background: #bfdbff; border-left: 1px solid #e4f0ff; }
.tabs button { padding: 0 12px; height: 24px; }
.tabs .on { background: linear-gradient(#f6faff, #e1ebf8); border: 1px solid #a9c6ea; border-bottom: 0; border-radius: 4px 4px 0 0; padding: 0 11px; }
.help { margin: 4px 41px 0 auto; display: flex; gap: 12px; }
.ribbon { display: flex; gap: 3px; height: 107px; padding: 3px 2px 0 3px; background: linear-gradient(#d9e8f8, #c4dcf6); border-top: 1px solid #8db2e3; border-bottom: 2px solid #9fc4e8; }
.grp { flex: none; display: flex; flex-direction: column; border: 1px solid #9fbfe2; border-radius: 3px; background: linear-gradient(#dfe9f6, #c9daee 20%, #d6e5f5 80%, #c0d8f1 80%); }
.g1 { width: 72px; } .g2 { width: 151px; margin-right: 1px; } .g3 { width: 111px; } .g4 { width: 88px; } .g5 { width: 116px; } .g6 { width: 68px; margin-right: 1px; } .g7 { width: 124px; }
.body { flex: 1; padding: 2px 3px 0; display: flex; flex-direction: column; gap: 4px; }
.row { display: flex; flex-direction: row; align-items: center; }
.body.row { gap: 3px; }
.r5 { gap: 5px; }
.h25 { height: 25px; }
.cap { height: 20px; display: flex; align-items: center; justify-content: center; color: #3e6aaa; position: relative; }
.cap svg { position: absolute; right: 4px; top: 3px; }
.bg { display: flex; border: 1px solid #9ab7dd; border-radius: 3px; height: 21px; background: linear-gradient(#dbe7f5, #c6d9ef); }
.bg button { gap: 3px; color: #222; }
.bg button + button { border-left: 1px solid #b9cfea; }
.t22 { width: 22px; } .t25 { width: 25px; } .t30 { width: 30px; } .t33 { width: 32px; }
.g2 .t25:last-child { width: 27px; }
.gap { gap: 4px; }
.serif { font-family: "Liberation Serif", serif; font-size: 14px; }
.bg .t22.serif { gap: 0; }
.sm b { font-size: 11px; }
.tri { align-self: flex-start; margin-top: 3px; }
.fc { border-bottom: 4px solid #f00; color: #24489c; line-height: 13px; width: 16px; font-size: 16px; font-weight: 700; }
.wen { width: 34px; }
.wen span { display: grid; font-size: 11px; line-height: 11px; color: #2a55c8; justify-items: center; }
.wen small { font-size: 9px; line-height: 8px; color: #111; font-weight: 700; }
.hot { background: linear-gradient(#fbd9a2, #ffb24a); }
.s { display: flex; align-items: center; height: 25px; border: 1px solid #abc6e8; background: #eaf2fb; padding: 0 4px 0 0; color: #111; }
.s + .s { margin-left: -1px; }
.s select { appearance: none; flex: 1; width: 10px; }
.s1 { width: 97px; } .s2 { width: 48px; } .s3 { width: 80px; }
.big { flex-direction: column; align-self: stretch; justify-content: flex-start; width: 40px; padding-top: 2px; gap: 4px; color: #15428b; }
.g1 .big { gap: 6px; }
.g7 .body { gap: 0; }
.g7 .big { width: 38px; }
.big span { line-height: 17px; white-space: nowrap; text-align: left; }
.big span svg { display: inline; vertical-align: 3px; }
.col { display: flex; flex-direction: column; align-self: stretch; }
.ic3 { gap: 6px; padding: 2px 0 0 2px; }
.ic3 button { height: 16px; gap: 6px; }
.ed { width: 34px; }
.dec { font-size: 9px; line-height: 9px; font-weight: 700; }
.dec span { text-align: right; } .dec em { color: #2a62d0; font-style: normal; font-family: "DejaVu Sans"; font-size: 8px; }
.list { gap: 4px; padding: 3px 5px; align-items: flex-start; }
.list button { gap: 3px; height: 18px; }
.list button > svg:last-child { margin-left: 2px; }
.fbar { display: flex; height: 24px; padding: 3px 0 2px; background: #d5e6f8; border-bottom: 1px solid #9fbfe2; color: #000; }
.fbar input { font: 15px/18px "Noto Sans CJK SC", sans-serif; min-width: 0; outline: 0; }
.nbox { width: 159px; background: #fff; display: flex; align-items: center; padding-right: 6px; }
.nbox input { flex: 1; text-align: center; font: 13px "Liberation Mono", monospace; padding-right: 10px; }
.fx { width: 76px; border-radius: 10px 0 0 10px; border: 1px solid #8ea9cf; background: linear-gradient(#e4effc, #a9c4e8); display: flex; align-items: center; justify-content: space-between; padding: 0 5px 0 4px; font: italic bold 14px "Liberation Serif", serif; color: #555; }
.fx i { width: 9px; height: 9px; border-radius: 50%; background: #b4bccb; }
.fx sub { font-size: 10px; vertical-align: -1px; }
.fin { flex: 1; background: #fff; padding-left: 12px; font-weight: 300; }

/* Cells share one baseline, set by a strut of fixed height */
.sheet { border-collapse: separate; border-spacing: 0; table-layout: fixed; width: 100%; background: #fff; color: #000; font: 13px/11px "Liberation Mono", monospace; margin-top: 2px; }
.c0 { width: 33px; } .c1 { width: 148px; } .c2 { width: 550px; }
.sheet th { font-weight: 400; padding: 0; height: 19px; background: #e4ecf7; color: #2d4157; border: solid #9eb6ce; border-width: 0 1px 1px 0; vertical-align: bottom; text-align: center; }
.sheet thead th { background: linear-gradient(#f9d99f, #f1bf5f); border-color: #f29536; vertical-align: middle; }
.sheet .corner { background: #a9c4e9; border-color: #9eb6ce; }
.corner svg { margin: 4px 3px 0 auto; }
.sheet td { height: 19px; padding: 0 0 0 1px; border-bottom: 1px solid #000; white-space: nowrap; vertical-align: top; }
.sheet td::before, .sheet tbody th::before { content: ""; display: inline-block; height: 16px; vertical-align: baseline; }
.sheet td:nth-child(2), .cn { font-family: "Noto Sans CJK SC", sans-serif; font-size: 16px; font-weight: 300; }
.sheet td:nth-child(3) { border-left: 2px solid #000; }
.m { font: 13px/11px "Liberation Mono", monospace; }
.sheet .h td { height: 29px; font-weight: 700; font-size: 22px; padding-left: 3px; }
.sheet .h td::before { height: 24px; }
.sheet .h td:nth-child(2), .sheet .h .cn { font-size: 24px; font-weight: 500; }
.cur td { box-shadow: inset 0 1px #000; }
.sheet .cur td:nth-child(3) { background: #e9e9f5; }
.sheet .cur th { background: #ffcf8a; border-color: #f29536; }
.sheet .hov th { background: #b7c3d3; }
```
